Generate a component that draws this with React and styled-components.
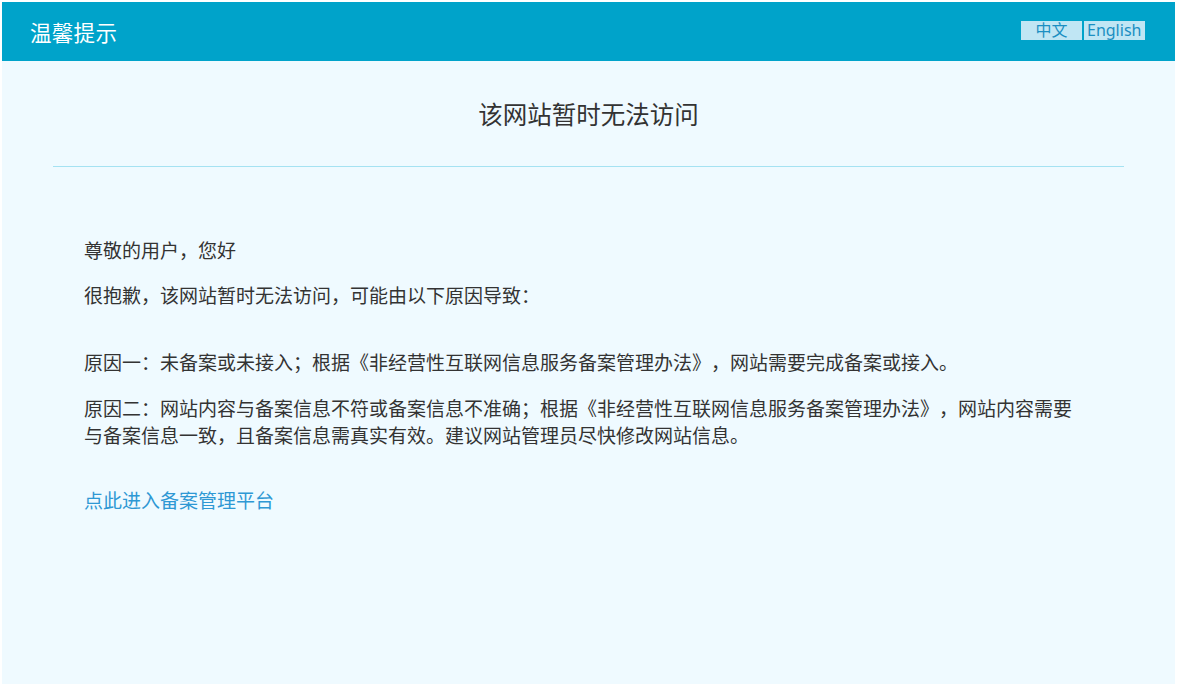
import React from "react";
import styled, { createGlobalStyle } from "styled-components";

const GlobalStyle = createGlobalStyle`
  html, body {
    margin: 0;
    padding: 0;
    background: #ffffff;
  }
  body {
    font-family: "Noto Sans CJK SC", "Noto Sans", sans-serif;
    text-spacing-trim: space-all;
  }
`;

const Page = styled.div`
  width: 1173px;
  height: 682px;
  margin: 2px 0 0 2px;
  background: #effaff;
  display: flex;
  flex-direction: column;
`;

const Header = styled.header`
  height: 59px;
  background: #00a3ca;
  display: flex;
  align-items: center;
  justify-content: space-between;
  padding: 0 30px 0 28px;
`;

const HeaderTitle = styled.h1`
  margin: 0;
  font-size: 21.5px;
  font-weight: 400;
  color: #ffffff;
  letter-spacing: 0.3px;
`;

const LangSwitch = styled.div`
  display: flex;
  gap: 2px;
  margin-top: -3px;
`;

const LangButton = styled.span`
  width: 61px;
  height: 19px;
  background: #c0e6f4;
  color: #1b8fc2;
  font-family: "Noto Sans", "Noto Sans CJK SC", sans-serif;
  font-size: 16px;
  line-height: 19px;
  text-align: ${(p) => (p.$cn ? "center" : "left")};
  padding-left: ${(p) => (p.$cn ? "0" : "3px")};
  box-sizing: border-box;
  cursor: pointer;
`;

const Main = styled.main`
  flex: 1;
  padding: 0 51px;
`;

const Title = styled.h2`
  margin: 0;
  padding: 37px 0 36px;
  font-size: 24.5px;
  font-weight: 400;
  line-height: 32px;
  color: #333333;
  text-align: center;
  border-bottom: 1px solid #a5e2f2;
`;

const Content = styled.div`
  padding: 69px 0 0 31px;
  width: 1000px;
`;

const Para = styled.p`
  margin: 0 0 ${(p) => p.$gap || 19}px;
  font-size: 19px;
  line-height: 27px;
  color: #333333;
`;

const Link = styled.a`
  display: inline-block;
  margin-top: 19px;
  font-size: 19px;
  line-height: 27px;
  color: #2e98d4;
  text-decoration: none;
`;

export default function App() {
  return (
    <>
      <GlobalStyle />
      <Page>
        <Header>
          <HeaderTitle>温馨提示</HeaderTitle>
          <LangSwitch>
            <LangButton $cn>中文</LangButton>
            <LangButton>English</LangButton>
          </LangSwitch>
        </Header>
        <Main>
          <Title>该网站暂时无法访问</Title>
          <Content>
            <Para $gap={18}>尊敬的用户，您好</Para>
            <Para $gap={40}>很抱歉，该网站暂时无法访问，可能由以下原因导致：</Para>
            <Para>
              原因一：未备案或未接入；根据《非经营性互联网信息服务备案管理办法》，网站需要完成备案或接入。
            </Para>
            <Para>
              原因二：网站内容与备案信息不符或备案信息不准确；根据《非经营性互联网信息服务备案管理办法》，网站内容需要与备案信息一致，且备案信息需真实有效。建议网站管理员尽快修改网站信息。
            </Para>
            <Link href="#">点此进入备案管理平台</Link>
          </Content>
        </Main>
      </Page>
    </>
  );
}
